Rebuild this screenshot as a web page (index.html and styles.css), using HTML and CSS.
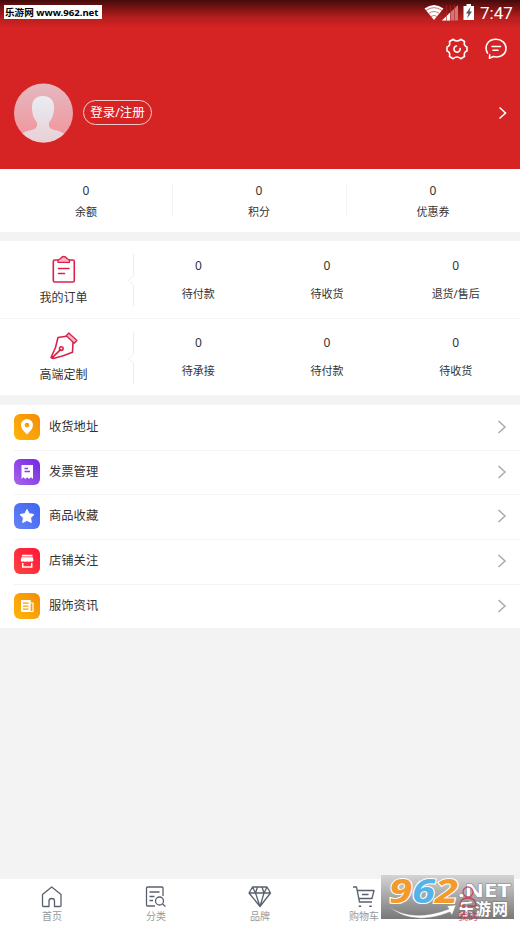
FILE: index.html
```
<!DOCTYPE html>
<html lang="zh-CN">
<head>
<meta charset="utf-8">
<title>我的</title>
<link rel="stylesheet" href="styles.css">
</head>
<body>
<div class="app">
  <header class="hero">
    <div class="status">
      <svg width="90" height="22" viewBox="0 0 90 22">
        <path d="M0.500 8.500Q10 1.500 19.500 8.500L10 20Z" fill="#fff"/>
        <path d="M2 10.500Q10 4.800 18 10.500M4.500 13.500Q10 9.500 15.500 13.500M7 16.500Q10 14.300 13 16.500" fill="none" stroke="#c96a6a" stroke-width=".9"/>
        <path d="M18 20.500L34 5V20.500Z" fill="#cf7777"/>
        <path d="M18 20.500L26 12.700V20.500Z" fill="#fff"/>
        <path d="M22.500 5V21M26.500 5V21M30.500 5V21" stroke="#b52929" stroke-width=".6"/>
        <path d="M39.500 6H42.500V4H47V6H50V20H39.500Z" fill="#fff"/>
        <path d="M46.500 7L42 13.500H44.500L43 18.500L48 11.500H45.500Z" fill="#555"/>
      </svg>
      <span class="clock">7:47</span>
    </div>
    <div class="site-tag">乐游网 www.962.net</div>
    <div class="tools">
      <svg width="24" height="24" viewBox="0 0 24 24" fill="none" stroke="#fff" stroke-width="1.600" stroke-linejoin="round" stroke-linecap="round">
        <path d="M8.200 2.300Q12 5.700 15.800 2.300L19.500 4.500Q18.500 9 22 10V14Q18.500 15 19.500 19.500L15.800 21.700Q12 18.300 8.200 21.700L4.500 19.500Q5.500 15 2 14V10Q5.500 9 4.500 4.500Z"/>
        <path d="M11.500 9A3.100 3.100 0 1 0 15.100 11.500"/>
      </svg>
      <svg width="24" height="24" viewBox="0 0 24 24" fill="none" stroke="#fff" stroke-width="1.600" stroke-linejoin="round" stroke-linecap="round">
        <path d="M3.500 16.200C-0.500 8.500 4.500 2.300 12 2.300C17.700 2.300 22 6 22 11.300C22 17.300 16.300 21.200 9.500 19.500L5.500 21.200L5.700 17.800"/>
        <path d="M8 9.500H16.500M9 13.300H14"/>
      </svg>
    </div>
    <div class="account">
      <svg class="avatar" width="60" height="60" viewBox="0 0 60 60">
        <defs>
          <linearGradient id="av" x2="0" y2="1"><stop stop-color="#e4b9bf"/><stop offset="1" stop-color="#f3929a"/></linearGradient>
          <linearGradient id="man" x2="0" y2="1"><stop stop-color="#e9edf2"/><stop offset="1" stop-color="#e8cfd6"/></linearGradient>
          <clipPath id="round"><circle cx="30.500" cy="30" r="29.500"/></clipPath>
        </defs>
        <g clip-path="url(#round)">
          <path d="M0 0H60V60H0Z" fill="url(#av)"/>
          <path d="M30 13C22 13 18.500 18 19 26C19.300 32 21 36 24 39.500C25 46 21 46.500 16 47.500C11.500 48.500 9 50.500 6 54V60H54V54C51 50.500 48.500 48.500 44 47.500C39 46.500 35 46 36 39.500C39 36 40.700 32 41 26C41.500 18 38 13 30 13Z" fill="url(#man)"/>
        </g>
      </svg>
      <span class="login">登录/注册</span>
      <svg class="go" width="10" height="14" viewBox="0 0 10 14"><path d="M1.500 1.500L7.500 7L1.500 12.500" fill="none" stroke="#fff" stroke-width="1.600"/></svg>
    </div>
  </header>

  <section class="stats">
    <div class="stat"><b>0</b><span>余额</span></div>
    <div class="stat"><b>0</b><span>积分</span></div>
    <div class="stat"><b>0</b><span>优惠券</span></div>
  </section>

  <section class="orders">
    <div class="order-row">
      <div class="kind">
        <svg width="28" height="28" viewBox="0 0 28 28" fill="none" stroke="#d92248" stroke-width="1.600" stroke-linejoin="round" stroke-linecap="round">
          <rect x="3.300" y="5" width="21" height="22" rx="1.500"/>
          <path d="M8 7.300V5.300L10.500 3.500Q13.800 -0.500 17 3.500L19.500 5.300V7.300Z" fill="#f8b5c5" stroke-width="1.300"/>
          <path d="M8.500 13.500H19M8.500 18.500H14.500"/>
        </svg>
        <span>我的订单</span>
      </div>
      <svg class="notch" width="7" height="52" viewBox="0 0 7 52"><path d="M6.500 0V22L1.500 26.500L6.500 31V52" fill="none" stroke="#ededed"/></svg>
      <div class="cell"><b>0</b><span>待付款</span></div>
      <div class="cell"><b>0</b><span>待收货</span></div>
      <div class="cell"><b>0</b><span>退货/售后</span></div>
    </div>
    <div class="order-row">
      <div class="kind">
        <svg width="28" height="28" viewBox="0 0 28 28" fill="none" stroke="#d92248" stroke-width="1.600" stroke-linejoin="round" stroke-linecap="round">
          <path d="M16.300 4.200L8 5.500L5.500 15.500L1 25.500L3 26.500L12.500 24L22.500 20.300L23 10.500M2 25.800L10.300 17.800"/>
          <circle cx="11.300" cy="16.600" r="1.800"/>
          <path d="M18.800 1L27 8.500L24.200 11.300L16.300 3.800Z" fill="#f8b5c5" stroke-width="1.300"/>
        </svg>
        <span>高端定制</span>
      </div>
      <svg class="notch" width="7" height="52" viewBox="0 0 7 52"><path d="M6.500 0V22L1.500 26.500L6.500 31V52" fill="none" stroke="#ededed"/></svg>
      <div class="cell"><b>0</b><span>待承接</span></div>
      <div class="cell"><b>0</b><span>待付款</span></div>
      <div class="cell"><b>0</b><span>待收货</span></div>
    </div>
  </section>

  <nav class="menu">
    <div class="item">
      <svg class="badge orange" viewBox="0 0 26 26"><path fill-rule="evenodd" d="M13 5.200C9.400 5.200 7 7.800 7 11C7 14.700 10.500 18 13 20.500C15.500 18 19 14.700 19 11C19 7.800 16.600 5.200 13 5.200ZM13 8.700A2.400 2.400 0 1 1 13 13.500A2.400 2.400 0 1 1 13 8.700Z" fill="#fff"/></svg>
      <span>收货地址</span>
      <svg class="arrow" viewBox="0 0 10 14"><path d="M1.500 1L8 7L1.500 13"/></svg>
    </div>
    <div class="item">
      <svg class="badge purple" viewBox="0 0 26 26"><path d="M7.500 6H19V20L17 18.300L15 20L13.200 18.300L11.300 20L9.400 18.300L7.500 20Z" fill="#fff"/><path d="M10.500 9.500H14M10.500 12.500H16" stroke="#8b3be8" stroke-width="1.300"/></svg>
      <span>发票管理</span>
      <svg class="arrow" viewBox="0 0 10 14"><path d="M1.500 1L8 7L1.500 13"/></svg>
    </div>
    <div class="item">
      <svg class="badge blue" viewBox="0 0 26 26"><path d="M13 6.500L15.200 10.700L20 11.500L16.600 14.800L17.300 19.500L13 17.400L8.700 19.500L9.400 14.800L6 11.500L10.800 10.700Z" fill="#fff" stroke="#fff" stroke-linejoin="round"/></svg>
      <span>商品收藏</span>
      <svg class="arrow" viewBox="0 0 10 14"><path d="M1.500 1L8 7L1.500 13"/></svg>
    </div>
    <div class="item">
      <svg class="badge red" viewBox="0 0 26 26"><path d="M8 6.800H18.500V8.500H8ZM7.500 9.300H18.800L19.500 12.500Q18.500 14.500 16.800 13.200Q15 14.500 13.200 13.200Q11.300 14.500 9.500 13.200Q7.500 14.500 6.800 12.500Z" fill="#fff"/><path d="M8.700 15V19H17.700V15" fill="none" stroke="#fff" stroke-width="1.500"/></svg>
      <span>店铺关注</span>
      <svg class="arrow" viewBox="0 0 10 14"><path d="M1.500 1L8 7L1.500 13"/></svg>
    </div>
    <div class="item">
      <svg class="badge orange" viewBox="0 0 26 26"><path d="M7 7H16.700V19H8.500Q7 19 7 17.500Z" fill="#fff"/><path d="M9 10.200H14.500M9 13.200H14.500M9 16.200H14.500" stroke="#f9a000" stroke-width="1.300"/><path d="M16.500 10H19V18.500H15" fill="none" stroke="#fff" stroke-width="1.200"/></svg>
      <span>服饰资讯</span>
      <svg class="arrow" viewBox="0 0 10 14"><path d="M1.500 1L8 7L1.500 13"/></svg>
    </div>
  </nav>

  <footer class="tabs">
    <div class="tab">
      <svg viewBox="0 0 24 24"><path d="M2.500 9.500L11.700 2L21 9.500V20.500Q21 21.500 20 21.500H14.500V16Q14.500 13.500 11.700 13.500Q9 13.500 9 16V21.500H3.500Q2.500 21.500 2.500 20.500Z"/></svg>
      <span>首页</span>
    </div>
    <div class="tab">
      <svg viewBox="0 0 24 24"><path d="M11 21H3.500Q2.500 21 2.500 20V3Q2.500 2 3.500 2H18Q19 2 19 3V11M5.500 7H15.500M5.500 11.500H10.500M5.500 15.500H9M18.500 19L21.500 21.500"/><circle cx="15.500" cy="16" r="4"/></svg>
      <span>分类</span>
    </div>
    <div class="tab">
      <svg viewBox="0 0 24 24"><path d="M4.500 2H19L22.500 8L12 21.500L1 8ZM1 8H22.500M4.500 2L7.500 8L12 21.500L16 8L19 2M7.500 8L9.500 2M16 8L14 2"/></svg>
      <span>品牌</span>
    </div>
    <div class="tab">
      <svg viewBox="0 0 24 24"><path d="M1 2H4.500L7.500 17H20M5.500 5.500H22L20 13.500H7M10 9.500H16.500"/><path d="M8 20.500V22M18.500 20.500V22" stroke-width="2.500"/></svg>
      <span>购物车</span>
    </div>
    <div class="tab mine">
      <svg viewBox="0 0 24 24"><circle cx="12" cy="7" r="5"/><path d="M4 21Q4 13 12 13Q20 13 20 21Z"/></svg>
      <span>我的</span>
    </div>
  </footer>

  <div class="watermark">
    <svg width="133" height="44" viewBox="0 0 133 44">
      <path d="M7 31Q31 48 68 34L66 31L75 30L71 40L69 37Q31 52 7 31Z" fill="#fff" stroke="#888" stroke-width=".5"/>
      <text class="digits" y="28" textLength="69" lengthAdjust="spacingAndGlyphs" x="8"><tspan fill="#f39a2d">9</tspan><tspan fill="#55b3e8">6</tspan><tspan fill="#f39a2d">2</tspan></text>
      <text class="net" x="77" y="22" textLength="53" lengthAdjust="spacingAndGlyphs">.NET</text>
      <text class="brand" x="77" y="40" textLength="50">乐游网</text>
    </svg>
  </div>
</div>
</body>
</html>
```
FILE: styles.css
```
* { box-sizing: border-box; }
body {
  margin: 0;
  background: #f3f3f3;
  color: #333;
  font-family: "Noto Sans", "Noto Sans CJK SC", sans-serif;
  font-size: 12px;
}
svg { display: block; flex: none; }
b { font-weight: 400; }
.app {
  position: relative;
  display: flex;
  flex-direction: column;
  width: 520px;
  height: 925px;
  overflow: hidden;
}
.hero {
  height: 169px;
  background: linear-gradient(#430b0b 0, #801414 9px, #b81e1e 18px, #d62424 28px);
  color: #fff;
}
.status {
  display: flex;
  justify-content: flex-end;
  height: 26px;
  padding-right: 7px;
}
.clock {
  width: 33px;
  margin-left: -34px;
  font: 17px/27px Roboto, sans-serif;
  white-space: nowrap;
}
.site-tag {
  position: absolute;
  left: 4px;
  top: 5px;
  width: 98px;
  height: 14px;
  padding-left: 1px;
  background: #fff;
  color: #000;
  font: 700 9.6px/15px "Noto Sans", "Noto Sans CJK SC", sans-serif;
  white-space: nowrap;
}
.tools {
  display: flex;
  justify-content: flex-end;
  gap: 15px;
  padding: 11px 12.500px 0 0;
}
.account {
  display: flex;
  align-items: center;
  height: 60px;
  margin-top: 22px;
  padding: 0 12px 0 13px;
}
.login {
  width: 69px;
  height: 25px;
  margin: -1px 0 0 10px;
  border: 1px solid #f5c8c8;
  border-radius: 13px;
  font-size: 12.500px;
  line-height: 23px;
  text-align: center;
  white-space: nowrap;
}
.go { margin-left: auto; }
.stats {
  display: flex;
  height: 63px;
  padding-top: 14px;
  background: #fff;
}
.stat {
  display: flex;
  flex: 1;
  flex-direction: column;
  align-items: center;
  height: 34px;
}
.stat + .stat { border-left: 1px solid #f4f4f4; padding-right: 1px; }
.stat b { flex: none; height: 20px; line-height: 15px; }
.stat span { margin-top: 1px; font-size: 11px; line-height: 16px; }
.orders { margin-top: 9px; background: #fff; }
.order-row { display: flex; height: 77px; }
.order-row + .order-row { border-top: 1px solid #f3f3f3; }
.kind {
  display: flex;
  flex-direction: column;
  align-items: center;
  width: 127px;
  padding-top: 14px;
}
.order-row + .order-row .kind { padding-top: 13px; }
.kind span { margin-top: 6px; line-height: 18px; }
.notch { margin-top: 13px; }
.cell {
  display: flex;
  flex: 1;
  flex-direction: column;
  align-items: center;
  padding-top: 16px;
}
.order-row + .order-row .cell { padding-top: 15px; }
.cell b { line-height: 17px; }
.cell span { margin-top: 12px; font-size: 11px; line-height: 16px; }
.menu { margin-top: 10px; padding-left: 14px; background: #fff; }
.item {
  display: flex;
  align-items: center;
  height: 44.700px;
  padding: 0 13px 1.500px 0;
}
.item + .item { border-top: 1px solid #f3f3f3; }
.item span { margin-left: 9px; font-size: 12.300px; line-height: 18px; }
.badge { width: 26px; height: 26px; border-radius: 6px; }
.orange { background: linear-gradient(45deg, #ffb60a, #f48c08); }
.purple { background: linear-gradient(45deg, #a865ee, #7426e3); }
.blue { background: linear-gradient(45deg, #6484f6, #3f63f1); }
.red { background: linear-gradient(45deg, #ff4540, #ff1538); }
.arrow { width: 10px; height: 14px; margin-left: auto; fill: none; stroke: #aaa; stroke-width: 1.500; }
.tabs {
  display: flex;
  height: 46px;
  margin-top: auto;
  background: #fff;
}
.tab {
  display: flex;
  flex: 1;
  flex-direction: column;
  align-items: center;
  padding-top: 6px;
  color: #999;
  font-size: 10px;
  line-height: 14px;
}
.tab svg { width: 24px; height: 24px; fill: none; stroke: #59616d; stroke-width: 1.300; stroke-linejoin: round; }
.mine { position: relative; z-index: 1; color: #c92a48; opacity: .75; }
.mine svg { stroke: #c92a48; }
.watermark {
  position: absolute;
  left: 381px;
  top: 875px;
  background: linear-gradient(#d4d4d4, #787878);
}
.digits { font: italic 700 34px "Open Sans", sans-serif; stroke: #fff; stroke-width: 2px; paint-order: stroke; }
.net { font: 700 18px "Open Sans", sans-serif; fill: #fff; stroke: #888; stroke-width: 1px; paint-order: stroke; }
.brand { font: 700 16px "Noto Sans CJK SC", sans-serif; fill: #fff; stroke: #777; stroke-width: 1px; paint-order: stroke; }
```
